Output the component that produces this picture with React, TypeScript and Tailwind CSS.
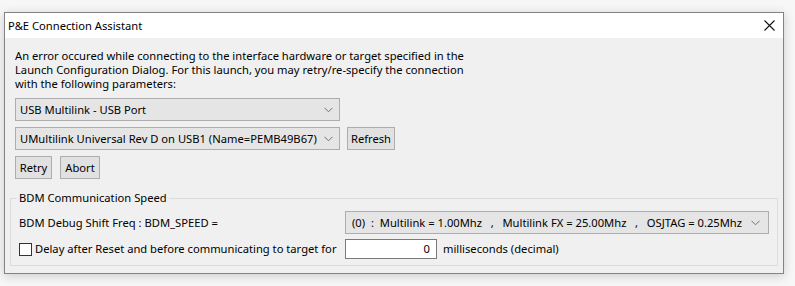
import React from "react";

const font = { fontFamily: '"Noto Sans", "Open Sans", sans-serif' };

function Chevron() {
  return (
    <svg width="9" height="6" viewBox="0 0 9 6" className="shrink-0">
      <path d="M0.5 0.8 L4.5 4.8 L8.5 0.8" fill="none" stroke="#707070" strokeWidth="1" />
    </svg>
  );
}

function Combo({ text, className = "" }: { text: string; className?: string }) {
  return (
    <div
      className={`h-[23px] flex items-center justify-between pl-[4px] pr-[6px] bg-[#e5e5e5] border border-[#adadad] ${className}`}
    >
      <span className="whitespace-pre">{text}</span>
      <Chevron />
    </div>
  );
}

function Btn({ label, className = "" }: { label: string; className?: string }) {
  return (
    <button
      className={`h-[23px] flex items-center justify-center bg-[#e1e1e1] border border-[#adadad] text-black ${className}`}
    >
      {label}
    </button>
  );
}

export default function App() {
  return (
    <div
      className="w-[795px] h-[286px] bg-[#f7f7f7] pt-[12px] pl-[4px] text-[11.2px] leading-[14px] text-black"
      style={font}
    >
      <div className="w-[780px] h-[262px] border border-[#838383] bg-[#f0f0f0] shadow-[0_2px_10px_rgba(0,0,0,0.18)] flex flex-col">
        {/* title bar */}
        <div className="h-[25px] shrink-0 bg-white flex items-center justify-between pl-[3px] pr-[8px]">
          <span className="pt-[1px]">P&amp;E Connection Assistant</span>
          <svg width="11" height="11" viewBox="0 0 11 11">
            <path d="M0.5 0.5 L10.5 10.5 M10.5 0.5 L0.5 10.5" stroke="#111" strokeWidth="1.1" />
          </svg>
        </div>

        {/* body */}
        <div className="flex-1 pt-[11px] px-[5px] pb-[6px] flex flex-col">
          <div className="pl-[5px]">
            <p>
              An error occured while connecting to the interface hardware or target specified in the
              <br />
              Launch Configuration Dialog. For this launch, you may retry/re-specify the connection
              <br />
              with the following parameters:
            </p>

            <Combo text="USB Multilink - USB Port" className="w-[325px] mt-[7px]" />

            <div className="flex items-center gap-[7px] mt-[6px]">
              <Combo text="UMultilink Universal Rev D on USB1 (Name=PEMB49B67)" className="w-[325px]" />
              <Btn label="Refresh" className="w-[48px]" />
            </div>

            <div className="flex gap-[8px] mt-[6px]">
              <Btn label="Retry" className="w-[37px]" />
              <Btn label="Abort" className="w-[40px]" />
            </div>
          </div>

          <fieldset className="mt-[12px] border border-[#dcdcdc] px-[8px] pt-[6px] pb-[6px]">
            <legend className="-ml-[2px] px-[2px] leading-[14px]">BDM Communication Speed</legend>

            <div className="flex items-center">
              <span className="w-[326px] shrink-0">BDM Debug Shift Freq : BDM_SPEED =</span>
              <Combo
                text="(0)  :  Multilink = 1.00Mhz   ,   Multilink FX = 25.00Mhz   ,   OSJTAG = 0.25Mhz"
                className="flex-1 pl-[6px] pr-[8px]"
              />
            </div>

            <div className="flex items-center mt-[5px] h-[20px]">
              <div className="w-[326px] shrink-0 flex items-center gap-[3px]">
                <span className="w-[13px] h-[13px] bg-white border border-[#333]" />
                <span>Delay after Reset and before communicating to target for</span>
              </div>
              <div className="w-[92px] h-[20px] bg-white border border-[#7a7a7a] flex items-center justify-end pr-[6px]">
                0
              </div>
              <span className="ml-[6px]">milliseconds (decimal)</span>
            </div>
          </fieldset>
        </div>
      </div>
    </div>
  );
}
